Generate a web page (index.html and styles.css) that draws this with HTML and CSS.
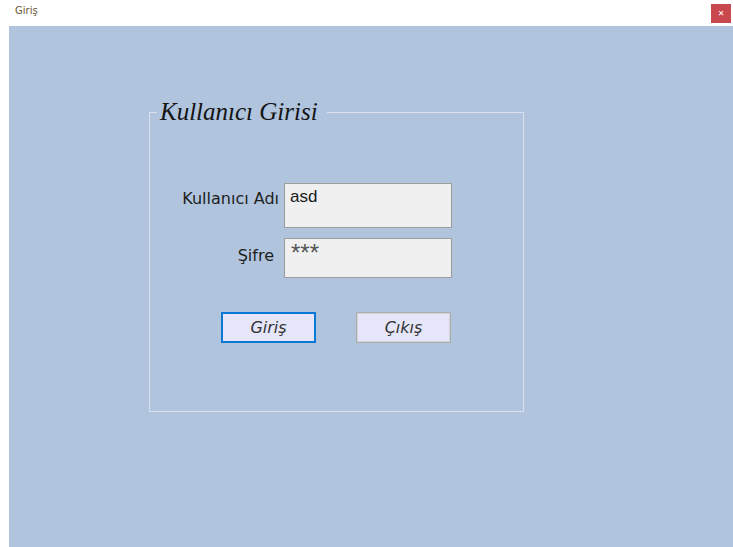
FILE: index.html
```html
<!DOCTYPE html>
<html lang="tr">
<head>
<meta charset="utf-8">
<title>Giriş</title>
<link rel="stylesheet" href="styles.css">
</head>
<body>
<div class="window">
  <div class="titlebar">
    <span class="title">Giriş</span>
    <span class="close">✕</span>
  </div>
  <div class="client">
    <fieldset class="group">
      <legend class="group-title">Kullanıcı Girisi</legend>
      <div class="row row-user">
        <label class="label label-user">Kullanıcı Adı</label>
        <div class="textbox tb-user">asd</div>
      </div>
      <div class="row row-pass">
        <label class="label label-pass">Şifre</label>
        <div class="textbox tb-pass"><span class="stars">***</span></div>
      </div>
      <div class="buttons">
        <button class="btn btn-primary">Giriş</button>
        <button class="btn">Çıkış</button>
      </div>
    </fieldset>
  </div>
</div>
</body>
</html>
```
FILE: styles.css
```css
html, body {
  margin: 0;
  padding: 0;
  background: #ffffff;
  width: 733px;
  height: 547px;
  overflow: hidden;
}
.window {
  display: flex;
  flex-direction: column;
  width: 733px;
  height: 547px;
}
.titlebar {
  height: 26px;
  display: flex;
  align-items: flex-start;
  justify-content: space-between;
  background: #ffffff;
}
.title {
  font-family: "DejaVu Sans", sans-serif;
  font-size: 10px;
  line-height: 12px;
  color: #6a5535;
  margin: 5px 0 0 15px;
}
.close {
  width: 20px;
  height: 19px;
  margin: 4px 2px 0 0;
  background: #c9484d;
  color: #ffffff;
  font-family: "DejaVu Sans", sans-serif;
  font-size: 8px;
  font-weight: bold;
  display: flex;
  align-items: center;
  justify-content: center;
}
.client {
  flex: 1;
  margin-left: 9px;
  background: #b0c4de;
  display: flex;
  flex-direction: column;
  align-items: flex-start;
}
.group {
  margin: 72px 0 0 140px;
  padding: 0;
  width: 375px;
  height: 314px;
  box-sizing: border-box;
  border: 1px solid #dae2ee;
  min-inline-size: 0;
}
.group-title {
  margin-left: 7px;
  padding: 0 9px 0 3px;
  font-family: "Liberation Serif", serif;
  font-style: italic;
  font-size: 25px;
  line-height: 28px;
  color: #141414;
}
.row {
  display: flex;
  align-items: flex-start;
}
.row-user {
  margin-top: 57px;
}
.row-pass {
  margin-top: 10px;
}
.label {
  width: 134px;
  box-sizing: border-box;
  text-align: right;
  font-family: "DejaVu Sans", sans-serif;
  font-size: 16px;
  line-height: 19px;
  color: #1e1e1e;
}
.label-user {
  padding-right: 5px;
  margin-top: 6px;
}
.label-pass {
  padding-right: 10px;
  margin-top: 8px;
}
.textbox {
  width: 168px;
  box-sizing: border-box;
  background: #f0f0f0;
  border: 1px solid #9c9c9c;
  padding: 3px 5px 0;
  font-family: "Liberation Sans", sans-serif;
  font-size: 17px;
  line-height: 20px;
  color: #1a1a1a;
}
.tb-user {
  height: 45px;
}
.tb-pass {
  height: 40px;
  padding-left: 6px;
  padding-top: 4px;
}
.stars {
  color: #555555;
  font-size: 24px;
  line-height: 20px;
}
.buttons {
  display: flex;
  gap: 40px;
  margin: 34px 0 0 71px;
}
.btn {
  width: 95px;
  height: 31px;
  box-sizing: border-box;
  background: #e6e6fa;
  border: 1px solid #adadad;
  box-shadow: inset 0 0 0 1px #d2d2dc;
  font-family: "DejaVu Sans", sans-serif;
  font-style: italic;
  font-size: 16px;
  color: #333333;
  padding: 0;
}
.btn-primary {
  border: 2px solid #0a78d4;
  box-shadow: none;
}
```
